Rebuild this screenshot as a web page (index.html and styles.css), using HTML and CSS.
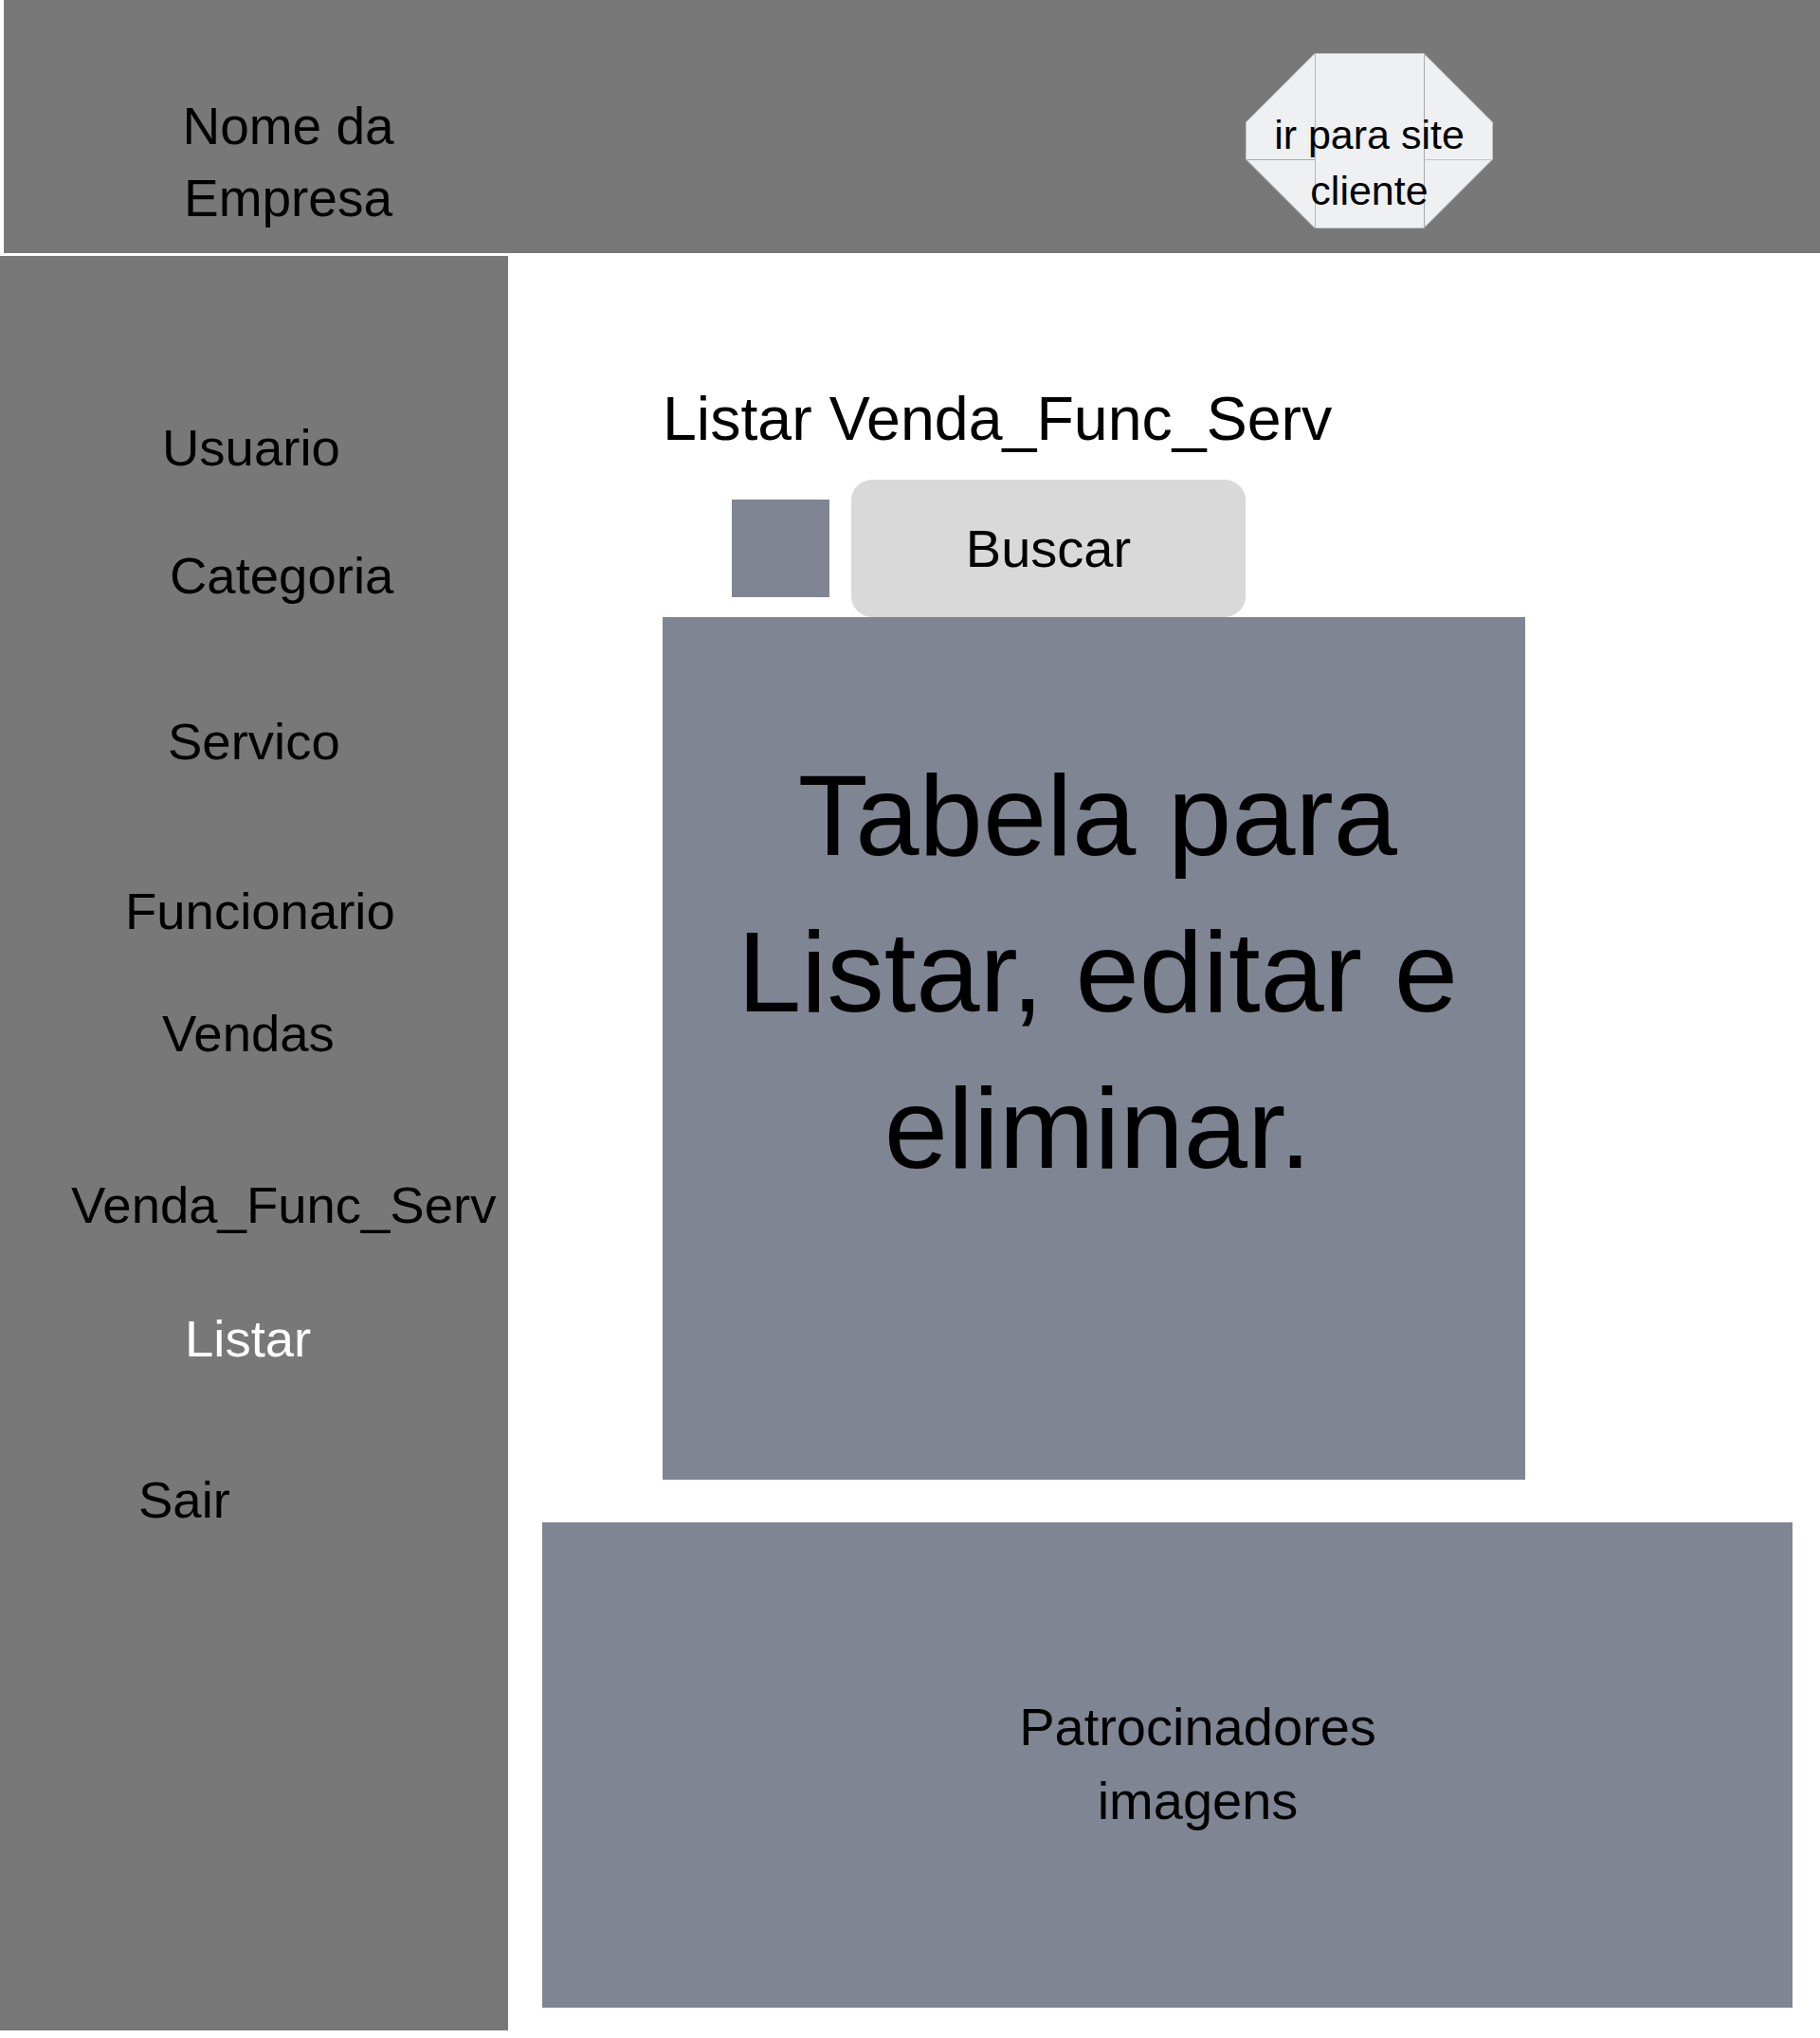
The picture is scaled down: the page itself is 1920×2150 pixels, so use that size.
FILE: index.html
```html
<!DOCTYPE html>
<html lang="pt-BR">
<head>
    <meta charset="UTF-8">
    <meta name="viewport" content="width=device-width, initial-scale=1.0">
    <title>Listar Venda_Func_Serv</title>
    <link rel="stylesheet" href="styles.css">
</head>
<body>
    <header class="topbar">
        <div class="brand">Nome da<br>Empresa</div>
        <a class="client-button" href="#">
            <svg class="client-shape" viewBox="0 0 261 185" width="261" height="185">
                <polygon points="73,0.5 188,0.5 260.5,73 260.5,112 188,184.5 73,184.5 0.5,112 0.5,73" fill="#eff0f2" stroke="#c4c4c6" stroke-width="1"/>
                <line x1="73.5" y1="0" x2="73.5" y2="185" stroke="#b4b4b6" stroke-width="1"/>
                <line x1="188.5" y1="0" x2="188.5" y2="185" stroke="#a8a8aa" stroke-width="1"/>
                <line x1="0" y1="112.5" x2="73" y2="112.5" stroke="#a8a8aa" stroke-width="1"/>
                <line x1="188" y1="112.5" x2="261" y2="112.5" stroke="#c4c4c6" stroke-width="1"/>
            </svg>
            <span class="client-label">ir para site<br>cliente</span>
        </a>
    </header>

    <div class="layout">
        <nav class="sidebar">
            <a class="nav-item nav-usuario" href="#">Usuario</a>
            <a class="nav-item nav-categoria" href="#">Categoria</a>
            <a class="nav-item nav-servico" href="#">Servico</a>
            <a class="nav-item nav-funcionario" href="#">Funcionario</a>
            <a class="nav-item nav-vendas" href="#">Vendas</a>
            <a class="nav-item nav-vfs" href="#">Venda_Func_Serv</a>
            <a class="nav-item nav-listar active" href="#">Listar</a>
            <a class="nav-item nav-sair" href="#">Sair</a>
        </nav>

        <main class="content">
            <section class="list-panel">
                <h1 class="page-title">Listar Venda_Func_Serv</h1>
                <div class="search-row">
                    <div class="search-box"></div>
                    <button class="search-button">Buscar</button>
                </div>
                <div class="table-area">Tabela para<br>Listar, editar e<br>eliminar.</div>
            </section>

            <section class="sponsors">Patrocinadores<br>imagens</section>
        </main>
    </div>
</body>
</html>
```

FILE: styles.css
```css
body {
    margin: 0;
    width: 1920px;
    font-family: "Liberation Sans", Arial, sans-serif;
    color: #000;
    background-color: #fff;
}
a {
    color: inherit;
    text-decoration: none;
}

/* barra de cima */
.topbar {
    display: flex;
    align-items: flex-start;
    margin-left: 4px;
    height: 267px;
    background-color: #787878;
}
.brand {
    width: 240px;
    margin-left: 180px;
    padding-top: 95px;
    font-size: 55px;
    line-height: 76px;
    text-align: center;
}
.client-button {
    position: relative;
    display: block;
    width: 261px;
    height: 185px;
    margin-top: 56px;
    margin-left: 890px;
    text-align: center;
}
.client-shape {
    position: absolute;
    top: 0;
    left: 0;
}
.client-label {
    position: relative;
    display: block;
    padding-top: 57px;
    font-size: 43px;
    line-height: 59px;
}

/* menu lateral */
.layout {
    display: flex;
    margin-top: 3px;
}
.sidebar {
    display: flex;
    flex-direction: column;
    align-items: flex-start;
    width: 536px;
    height: 1872px;
    padding-top: 172px;
    box-sizing: border-box;
    background-color: #787878;
}
.nav-item {
    font-size: 54.5px;
    line-height: 61px;
    white-space: nowrap;
}
.nav-item.active {
    color: #fff;
}
.nav-usuario { padding-left: 171px; }
.nav-categoria { margin-top: 74px; padding-left: 179px; }
.nav-servico { margin-top: 114px; padding-left: 177px; }
.nav-funcionario { margin-top: 118px; padding-left: 132px; }
.nav-vendas { margin-top: 68px; padding-left: 171px; }
.nav-vfs { margin-top: 120px; padding-left: 75px; }
.nav-listar { margin-top: 80px; padding-left: 195px; }
.nav-sair { margin-top: 109px; padding-left: 146px; }

/* conteudo */
.content {
    padding-left: 36px;
}
.list-panel {
    padding-left: 127px;
}
.page-title {
    margin: 135px 0 0;
    font-size: 64.5px;
    font-weight: normal;
    line-height: 74px;
    white-space: nowrap;
}
.search-row {
    display: flex;
    align-items: center;
    gap: 23px;
    margin-top: 27px;
}
.search-box {
    width: 103px;
    height: 103px;
    margin-left: 73px;
    background-color: #7f8593;
}
.search-button {
    width: 416px;
    height: 145px;
    padding: 0;
    border: none;
    border-radius: 22px;
    background-color: #d9d9d9;
    font-family: inherit;
    font-size: 56px;
    color: #000;
}
.table-area {
    width: 910px;
    height: 910px;
    padding-top: 127px;
    padding-left: 8px;
    box-sizing: border-box;
    background-color: #7f8593;
    font-size: 121px;
    line-height: 165px;
    text-align: center;
}
.sponsors {
    width: 1319px;
    height: 512px;
    margin-top: 45px;
    padding-top: 177px;
    padding-left: 64px;
    box-sizing: border-box;
    background-color: #7f8593;
    font-size: 56px;
    line-height: 78px;
    text-align: center;
}
```
